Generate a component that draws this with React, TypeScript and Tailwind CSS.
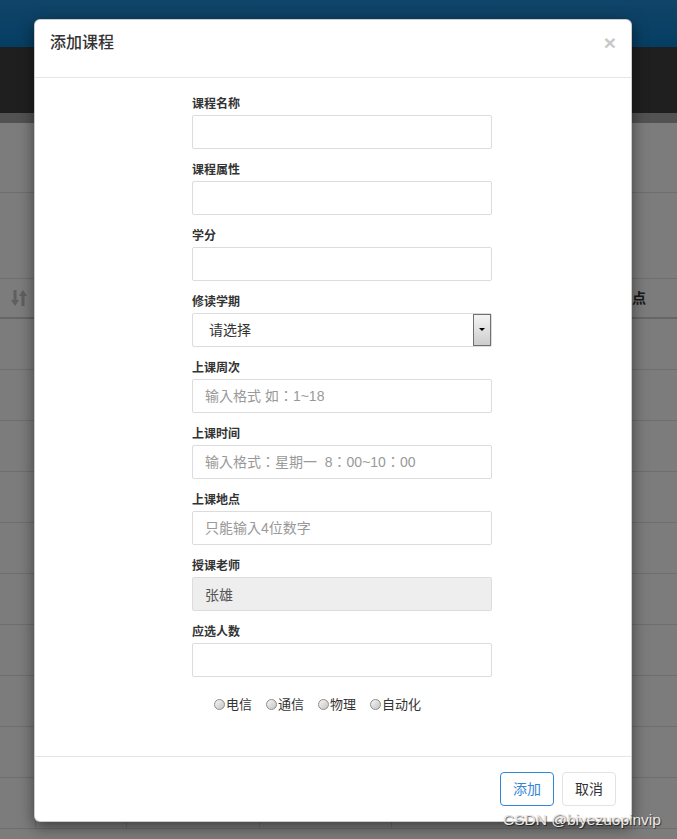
import React from "react";

type Field = {
  label: string;
  placeholder?: string;
  kind?: "text" | "select" | "disabled";
  value?: string;
};

const FIELDS: Field[] = [
  { label: "课程名称" },
  { label: "课程属性" },
  { label: "学分" },
  { label: "修读学期", kind: "select", value: "请选择" },
  { label: "上课周次", placeholder: "输入格式 如：1~18" },
  { label: "上课时间", placeholder: "输入格式：星期一  8：00~10：00" },
  { label: "上课地点", placeholder: "只能输入4位数字" },
  { label: "授课老师", kind: "disabled", value: "张雄" },
  { label: "应选人数" },
];

const MAJORS = ["电信", "通信", "物理", "自动化"];

const SortIcon = () => (
  <svg width="16" height="16" viewBox="0 0 16 16" fill="#bebebe">
    <path d="M2.5 0h3v10h2.5L4 16 0 10h2.5z" />
    <path d="M12 0l4 6h-2.5v10h-3V6H8z" />
  </svg>
);

const FormField = ({ field }: { field: Field }) => (
  <div className="mb-[11px]">
    <div className="text-[12px] font-bold leading-[17px] pt-[2px] mb-[2px] text-[#333]">{field.label}</div>
    {field.kind === "select" ? (
      <div className="relative h-[34px] w-full border border-[#dcdcdc] rounded-[2px] flex items-center pl-4 text-[14px] text-[#333]">
        {field.value}
        {/* native-looking dropdown button */}
        <span className="absolute right-0 top-0 bottom-0 w-[18px] border border-[#707070] bg-linear-to-b from-[#f4f4f4] to-[#cdcdcd] flex justify-center pt-[13px]">
          <span className="w-0 h-0 border-l-[3px] border-r-[3px] border-t-[3px] border-l-transparent border-r-transparent border-t-black" />
        </span>
      </div>
    ) : field.kind === "disabled" ? (
      <input
        readOnly
        value={field.value}
        className="h-[34px] w-full border border-[#dcdcdc] rounded-[2px] px-3 text-[14px] text-[#555] bg-[#eeeeee] outline-none"
      />
    ) : (
      <input
        placeholder={field.placeholder}
        className="h-[34px] w-full border border-[#dcdcdc] rounded-[2px] px-3 text-[14px] text-[#555] placeholder:text-[#999] outline-none font-['Liberation_Sans','Noto_Sans_CJK_TC',sans-serif]"
      />
    )}
  </div>
);

const App: React.FC = () => {
  return (
    <div className="relative w-full h-[839px] overflow-hidden bg-[#f8f8f8] font-['Liberation_Sans','Noto_Sans_CJK_SC',sans-serif]">
      {/* Page behind the dialog */}
      <div className="h-[47px] bg-linear-to-b from-[#2189d1] to-[#0a7cc6]" />
      <div className="h-[66px] bg-[#3e3e3e]" />
      <div className="h-[10px] bg-[#a4a4a4]" />
      <div className="h-[70px] border-b border-[#dddddd]" />
      <div className="h-[85px]" />

      {/* Table */}
      <div className="border-t border-[#dddddd]">
        <div className="h-[40px] border-b-2 border-[#cccccc] flex items-center justify-between pl-[11px] pr-[31px]">
          <SortIcon />
          <span className="text-[14px] font-bold text-[#333]">上课地点</span>
        </div>
        {Array.from({ length: 10 }).map((_, i) => (
          <div key={i} className="h-[51px] border-b border-[#dddddd] flex">
            <div className="w-[35px]" />
            <div className="w-[91px] border-l border-[#dddddd]" />
            <div className="w-[133px] border-l border-[#dddddd]" />
            <div className="w-[132px] border-l border-[#dddddd]" />
            <div className="flex-1 border-l border-[#dddddd]" />
          </div>
        ))}
      </div>

      {/* Backdrop */}
      <div className="absolute inset-0 bg-black/50" />

      {/* Modal */}
      <div className="absolute left-[34px] top-[19px] w-[598px] bg-white border border-black/20 rounded-[6px] shadow-[0_5px_15px_rgba(0,0,0,0.5)]">
        <div className="h-[58px] px-[15px] pt-[10px] flex justify-between items-start border-b border-[#e5e5e5]">
          <h4 className="text-[16px] font-medium leading-[26px] text-[#333]">添加课程</h4>
          <button className="mt-[2px] text-[21px] font-bold leading-[21px] text-[#c8c8c8]">×</button>
        </div>

        <div className="pt-[16px] pb-[43px]">
          <div className="ml-[157px] w-[300px]">
            {FIELDS.map((f) => (
              <FormField key={f.label} field={f} />
            ))}
            <div className="flex gap-[14px] pl-[22px] mt-[19px] leading-[17px]">
              {MAJORS.map((m) => (
                <label key={m} className="flex items-center gap-[1px] text-[13px] text-[#333]">
                  <span className="inline-block w-[11px] h-[11px] rounded-full border border-[#8c8c8c] bg-linear-to-br from-[#f6f6f6] to-[#c4c4c4]" />
                  {m}
                </label>
              ))}
            </div>
          </div>
        </div>

        <div className="flex justify-end gap-2 px-[15px] py-[15px] border-t border-[#e5e5e5]">
          <button className="h-[34px] px-3 text-[14px] rounded-[4px] border border-[#2f86d6] text-[#3584d6] bg-white">添加</button>
          <button className="h-[34px] px-3 text-[14px] rounded-[4px] border border-[#e3e3e3] text-[#333] bg-white">取消</button>
        </div>
      </div>

      {/* Watermark */}
      <div className="absolute left-[503px] top-[810px] text-[15.5px] leading-[20px] text-[#e8e8e8] [text-shadow:1px_1px_1px_rgba(0,0,0,0.6)]">
        CSDN @biyezuopinvip
      </div>
    </div>
  );
};

export default App;
